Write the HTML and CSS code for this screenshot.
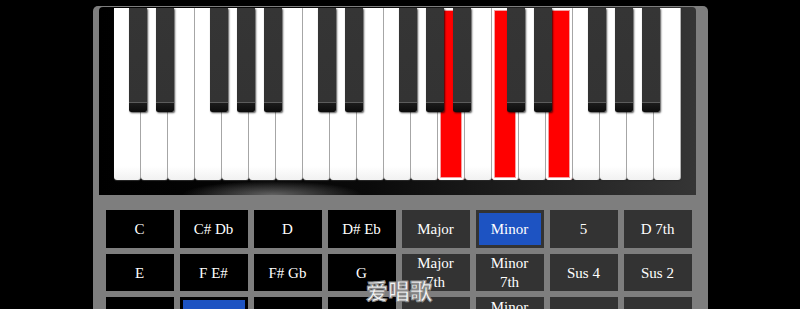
FILE: index.html
```html
<!DOCTYPE html>
<html>
<head>
    <meta charset="utf-8">
    <title>Piano chords</title>
    <link rel="stylesheet" href="styles.css">
</head>
<body>
<div class="panel">
    <div class="keyboard">
        <div class="keys">
            <div class="key white"></div><div class="key black"></div>
            <div class="key white"></div><div class="key black"></div>
            <div class="key white"></div>
            <div class="key white"></div><div class="key black"></div>
            <div class="key white"></div><div class="key black"></div>
            <div class="key white"></div><div class="key black"></div>
            <div class="key white"></div>

            <div class="key white"></div><div class="key black"></div>
            <div class="key white"></div><div class="key black"></div>
            <div class="key white"></div>
            <div class="key white"></div><div class="key black"></div>
            <div class="key white"></div><div class="key black"></div>
            <div class="key white on"></div><div class="key black"></div>
            <div class="key white"></div>

            <div class="key white on"></div><div class="key black"></div>
            <div class="key white"></div><div class="key black"></div>
            <div class="key white on"></div>
            <div class="key white"></div><div class="key black"></div>
            <div class="key white"></div><div class="key black"></div>
            <div class="key white"></div><div class="key black"></div>
            <div class="key white"></div>
        </div>
    </div>
    <div class="chord-grid">
        <div class="cell note">C</div>
        <div class="cell note">C# Db</div>
        <div class="cell note">D</div>
        <div class="cell note">D# Eb</div>
        <div class="cell type">Major</div>
        <div class="cell type selected">Minor</div>
        <div class="cell type">5</div>
        <div class="cell type">D 7th</div>

        <div class="cell note">E</div>
        <div class="cell note">F E#</div>
        <div class="cell note">F# Gb</div>
        <div class="cell note">G</div>
        <div class="cell type">Major 7th</div>
        <div class="cell type">Minor 7th</div>
        <div class="cell type">Sus 4</div>
        <div class="cell type">Sus 2</div>

        <div class="cell note">G# Ab</div>
        <div class="cell note selected">A</div>
        <div class="cell note">A# Bb</div>
        <div class="cell note">B</div>
        <div class="cell type">Dim</div>
        <div class="cell type">Minor 7b5</div>
        <div class="cell type">Aug</div>
        <div class="cell type">6th</div>
    </div>
</div>
<div class="watermark">爱唱歌</div>
</body>
</html>
```

FILE: styles.css
```css
html, body {
    overflow: hidden;
}

body {
    margin: 0;
    background: #000;
    font-family: "Liberation Serif", "Times New Roman", serif;
}

.panel {
    width: 615px;
    margin: 6px auto 0;
    padding: 1px 12px 20px 6px;
    box-sizing: border-box;
    background: #7e7e7e;
    border-radius: 5px 5px 0 0;
}

.keyboard {
    width: 597px;
    box-sizing: border-box;
    padding: 1px 15px 15px 15px;
    border-radius: 4px 4px 0 0;
    background:
        radial-gradient(ellipse 90px 14px at 29% 100%, #626262, rgba(0, 0, 0, 0)),
        linear-gradient(to right, #000 0%, #0a0a0a 45%, #262626 80%, #353535 100%);
}

.keys {
    display: flex;
    height: 172px;
}

.key {
    flex: none;
    box-sizing: border-box;
}

.white {
    width: 27px;
    height: 172px;
    background: linear-gradient(to bottom, #fff 0%, #fff 92%, #f1f1f1 100%);
    border-right: 1px solid #b4b4b4;
    border-radius: 0 0 3px 3px;
    box-shadow: 0 1px 1px #2a2a2a;
}

.white.on {
    background: #ff0000;
    box-shadow: inset 0 0 0 2px #fff, inset 0 0 0 3px #f4a0a0, 0 1px 1px #2a2a2a;
}

.black {
    position: relative;
    z-index: 1;
    width: 18px;
    height: 104px;
    margin: 0 -6px 0 -12px;
    border-radius: 0 0 2px 2px;
    background: linear-gradient(to bottom,
        #353535 0, #333 94px,
        #5c5c5c 94px, #5c5c5c 95px,
        #1c1c1c 95px, #0c0c0c 104px);
    box-shadow: 1px 1px 2px rgba(0, 0, 0, 0.7);
}

.chord-grid {
    display: grid;
    grid-template-columns: repeat(8, 68px);
    grid-auto-rows: 37.5px;
    gap: 6px;
    margin: 15px 0 0 7px;
}

.cell {
    display: flex;
    align-items: center;
    justify-content: center;
    box-sizing: border-box;
    padding: 2px 4px 0;
    border: 3px solid;
    color: #fff;
    font-size: 15px;
    line-height: 19px;
    text-align: center;
}

.note {
    background: #000;
    border-color: #000;
}

.type {
    background: #333;
    border-color: #333;
}

.cell.selected {
    background: #1d53c2;
}

.watermark {
    position: absolute;
    left: 366px;
    top: 273px;
    font-family: "Noto Sans CJK SC", sans-serif;
    font-weight: 700;
    font-size: 22px;
    color: #f4f4f4;
    -webkit-text-stroke: 1px #8a8a8a;
    text-shadow: 0 0 1px #555;
}
```
